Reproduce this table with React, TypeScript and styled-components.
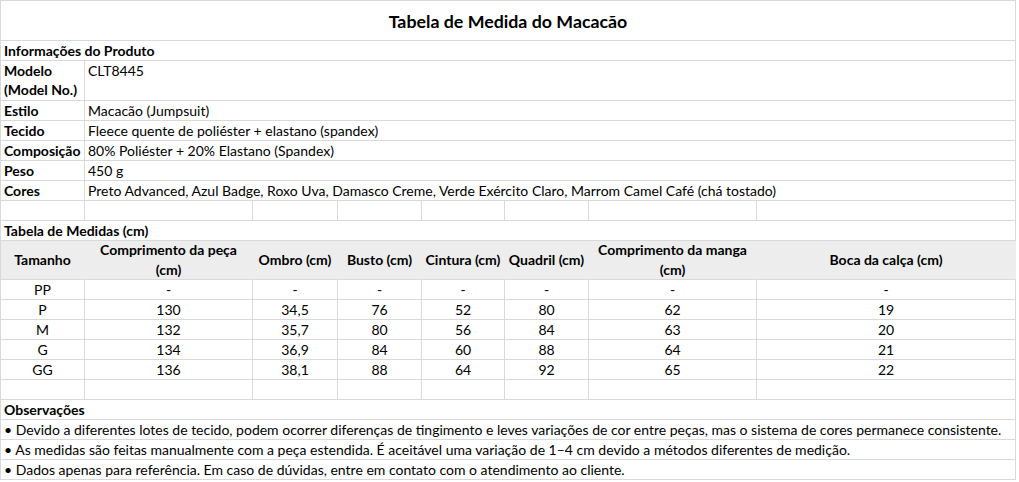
import React from "react";
import styled, { createGlobalStyle } from "styled-components";

const Global = createGlobalStyle`
  html, body { margin: 0; padding: 0; background: #ffffff; }
  body { font-family: Lato, "Open Sans", "Noto Sans", sans-serif; color: #000; }
`;

const LINE = "#d9d9d9";

const Sheet = styled.div`
  display: grid;
  grid-template-columns: 84px 168px 85px 84px 83px 84px 168px 259px;
  width: 1015px;
  border-top: 1px solid ${LINE};
  border-left: 1px solid ${LINE};
  font-size: 14px;
`;

type CellProps = {
  $span?: number;
  $h?: number;
  $bold?: boolean;
  $center?: boolean;
  $top?: boolean;
};

const Cell = styled.div<CellProps>`
  grid-column: span ${(p) => p.$span ?? 1};
  height: ${(p) => p.$h ?? 20}px;
  box-sizing: border-box;
  border-right: 1px solid ${LINE};
  border-bottom: 1px solid ${LINE};
  font-weight: ${(p) => (p.$bold ? 700 : 400)};
  display: flex;
  flex-direction: column;
  justify-content: ${(p) => (p.$top ? "flex-start" : "center")};
  align-items: ${(p) => (p.$center ? "center" : "flex-start")};
  text-align: ${(p) => (p.$center ? "center" : "left")};
  padding: 0 3px;
  line-height: 19px;
  white-space: nowrap;
  overflow: visible;
`;

const Title = styled(Cell)`
  font-size: 17.8px;
  font-weight: 700;
  align-items: center;
  padding-top: 1px;
`;

const HeaderCell = styled(Cell)`
  background: #ededed;
  border-right-color: #ededed;
  font-weight: 700;
  align-items: center;
  text-align: center;
  line-height: 20px;
`;

const info: [string[], string][] = [
  [["Modelo", "(Model No.)"], "CLT8445"],
  [["Estilo"], "Macacão (Jumpsuit)"],
  [["Tecido"], "Fleece quente de poliéster + elastano (spandex)"],
  [["Composição"], "80% Poliéster + 20% Elastano (Spandex)"],
  [["Peso"], "450 g"],
  [["Cores"], "Preto Advanced, Azul Badge, Roxo Uva, Damasco Creme, Verde Exército Claro, Marrom Camel Café (chá tostado)"],
];

const headers: string[][] = [
  ["Tamanho"],
  ["Comprimento da peça", "(cm)"],
  ["Ombro (cm)"],
  ["Busto (cm)"],
  ["Cintura (cm)"],
  ["Quadril (cm)"],
  ["Comprimento da manga", "(cm)"],
  ["Boca da calça (cm)"],
];

const rows: string[][] = [
  ["PP", "-", "-", "-", "-", "-", "-", "-"],
  ["P", "130", "34,5", "76", "52", "80", "62", "19"],
  ["M", "132", "35,7", "80", "56", "84", "63", "20"],
  ["G", "134", "36,9", "84", "60", "88", "64", "21"],
  ["GG", "136", "38,1", "88", "64", "92", "65", "22"],
];

const notes = [
  "• Devido a diferentes lotes de tecido, podem ocorrer diferenças de tingimento e leves variações de cor entre peças, mas o sistema de cores permanece consistente.",
  "• As medidas são feitas manualmente com a peça estendida. É aceitável uma variação de 1–4 cm devido a métodos diferentes de medição.",
  "• Dados apenas para referência. Em caso de dúvidas, entre em contato com o atendimento ao cliente.",
];

const Line = styled.span`
  display: block;
`;

export default function App() {
  return (
    <>
      <Global />
      <Sheet>
        <Title $span={8} $h={40}>Tabela de Medida do Macacão</Title>
        <Cell $span={8} $bold>Informações do Produto</Cell>
        {info.map(([label, value], i) => (
          <React.Fragment key={i}>
            <Cell $bold $h={label.length * 20} $top={label.length > 1}>
              {label.map((l) => (
                <Line key={l}>{l}</Line>
              ))}
            </Cell>
            <Cell $span={7} $h={label.length * 20} $top={label.length > 1}>
              {value}
            </Cell>
          </React.Fragment>
        ))}
        {Array.from({ length: 8 }, (_, i) => <Cell key={`a${i}`} />)}
        <Cell $span={8} $bold>Tabela de Medidas (cm)</Cell>
        {headers.map((h, i) => (
          <HeaderCell key={i} $h={39}>
            {h.map((l) => (
              <Line key={l}>{l}</Line>
            ))}
          </HeaderCell>
        ))}
        {rows.map((r, i) =>
          r.map((v, j) => (
            <Cell key={`${i}-${j}`} $center>
              {v}
            </Cell>
          ))
        )}
        {Array.from({ length: 8 }, (_, i) => <Cell key={`e${i}`} />)}
        <Cell $span={8} $bold>Observações</Cell>
        {notes.map((n, i) => (
          <Cell key={`n${i}`} $span={8}>
            {n}
          </Cell>
        ))}
      </Sheet>
    </>
  );
}
